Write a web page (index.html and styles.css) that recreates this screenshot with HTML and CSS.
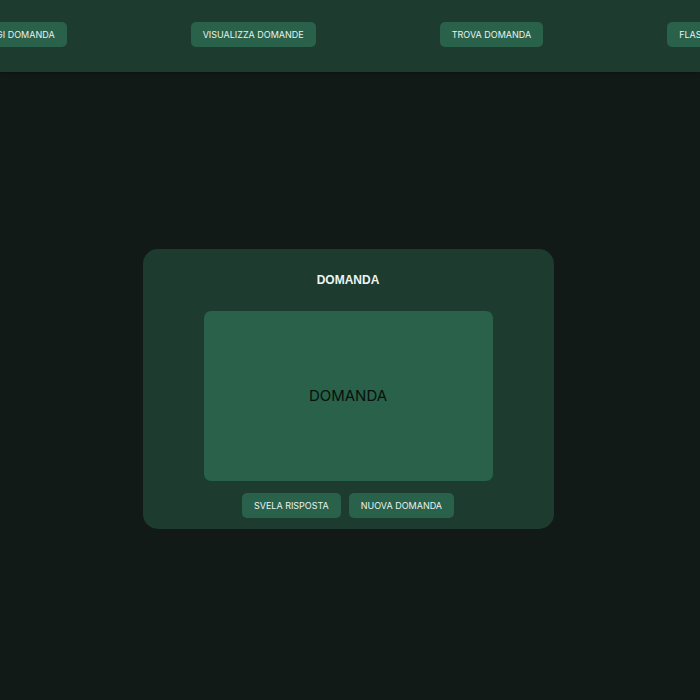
FILE: index.html
```html
<!DOCTYPE html>
<html lang="it">
<head>
<meta charset="utf-8">
<title>Domande</title>
<link rel="stylesheet" href="styles.css">
</head>
<body>
<header class="topbar">
  <nav class="nav">
    <button class="btn">Aggiungi domanda</button>
    <button class="btn">Visualizza domande</button>
    <button class="btn">Trova domanda</button>
    <button class="btn">Flashcard</button>
  </nav>
</header>
<main class="main">
  <section class="card">
    <h2 class="card-title">DOMANDA</h2>
    <div class="question">DOMANDA</div>
    <div class="actions">
      <button class="btn">Svela risposta</button>
      <button class="btn">Nuova domanda</button>
    </div>
  </section>
</main>
</body>
</html>
```

FILE: styles.css
```css
* { box-sizing: border-box; }
html, body { margin: 0; height: 100%; }
body {
  background: #121a17;
  font-family: Inter, "Liberation Sans", sans-serif;
  display: flex;
  flex-direction: column;
  overflow: hidden;
}
.topbar {
  height: 72px;
  padding-bottom: 3px;
  background: #1d3b2f;
  box-shadow: 0 1px 4px rgba(0,0,0,0.35);
  display: flex;
  align-items: center;
  justify-content: center;
  overflow: hidden;
  flex-shrink: 0;
}
.nav {
  display: flex;
  justify-content: center;
  gap: 124px;
  flex-shrink: 0;
  margin-right: 6px;
}
.btn {
  flex-shrink: 0;
  height: 25px;
  padding: 0 12px;
  border: none;
  border-radius: 5px;
  background: #29614a;
  color: #eaf3ee;
  font-family: Inter, "Liberation Sans", sans-serif;
  font-size: 9px;
  text-transform: uppercase;
  white-space: nowrap;
}
.main {
  flex: 1;
  display: flex;
  align-items: center;
  justify-content: center;
  padding-top: 5px;
}
.card {
  width: 411px;
  height: 280px;
  background: #1d3b2f;
  border-radius: 15px;
  display: flex;
  flex-direction: column;
  align-items: center;
  padding-top: 24px;
  margin-left: -4px;
}
.card-title {
  margin: 0;
  font-family: "Liberation Sans", Arial, sans-serif;
  font-weight: 700;
  font-size: 12px;
  line-height: 14px;
  color: #eef5f1;
}
.question {
  margin-top: 24px;
  width: 289px;
  height: 170px;
  background: #29614a;
  border-radius: 7px;
  display: flex;
  align-items: center;
  justify-content: center;
  font-family: Inter, "Liberation Sans", sans-serif;
  font-size: 15px;
  color: #07110c;
}
.actions {
  margin-top: 12px;
  display: flex;
  gap: 8px;
}
```
